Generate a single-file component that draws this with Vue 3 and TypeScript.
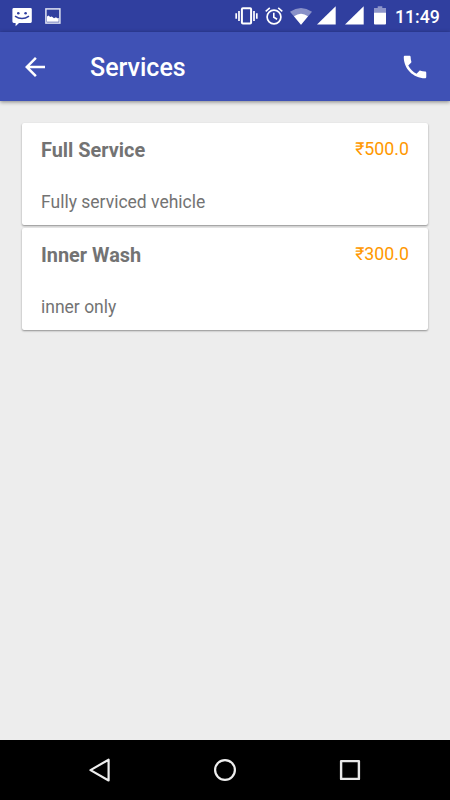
<script setup lang="ts">
interface Service {
  name: string
  price: string
  description: string
}

const services: Service[] = [
  { name: 'Full Service', price: '₹500.0', description: 'Fully serviced vehicle' },
  { name: 'Inner Wash', price: '₹300.0', description: 'inner only' },
]
</script>

<template>
  <div class="screen">
    <div class="status-bar">
      <svg class="message" width="20" height="19" viewBox="0 0 20 19">
        <path fill="#fff" d="M1.500 0h17a1.300 1.300 0 0 1 1.300 1.300v12.200a1.400 1.400 0 0 1-1.300 1.400H7L3.600 18.300V14.900H1.800A1.400 1.400 0 0 1 .4 13.500V1.300A1.300 1.300 0 0 1 1.500 0z" />
        <circle cx="6.300" cy="5.200" r="1.300" fill="#303f9f" />
        <circle cx="13.600" cy="5.200" r="1.300" fill="#303f9f" />
        <path d="M3 8.100Q10 13 17 8.100" fill="none" stroke="#303f9f" stroke-width="1.500" />
      </svg>
      <svg class="picture" width="16" height="16" viewBox="0 0 16 16">
        <rect x=".9" y=".9" width="14" height="14.200" fill="none" stroke="#dfe2f2" stroke-width="1.500" />
        <path fill="#fff" d="M2 13.700V8.600l1.500-1 1.700 1.500 1.600-.7 2.200 1.800 2-1 1.300 1.100 1.400-.4v3.800z" />
      </svg>
      <span class="spacer" />
      <svg class="vibrate" width="24" height="18" viewBox="0 0 24 18">
        <rect x="6.900" y="1.200" width="9.200" height="15.300" rx="1" fill="none" stroke="#fff" stroke-width="2" />
        <path fill="none" stroke="#fff" stroke-width="1.700" d="M4 4v10M1.200 6.200v5.600M19 4v10M21.800 6.200v5.600" />
      </svg>
      <svg class="alarm" width="18" height="18" viewBox="0 0 18 18">
        <circle cx="9" cy="10" r="6.900" fill="none" stroke="#fff" stroke-width="1.700" />
        <path fill="none" stroke="#fff" stroke-width="1.600" d="M.7 4.300 4.800.9M17.300 4.300 13.200.9M8.800 5.800v4.500l3.300 2" />
      </svg>
      <svg class="wifi" width="22" height="17" viewBox="0 0 22 17">
        <path fill="#8991c8" d="M0 3.700Q11-3.700 22 3.700L11 16.800z" />
        <path fill="#fff" d="M4 8.200Q11 3.200 18 8.200L11 16.800z" />
      </svg>
      <svg class="signal" width="19" height="19" viewBox="0 0 19 19">
        <path fill="#fff" d="M18.700.3v18.200H0z" />
      </svg>
      <svg class="signal second" width="19" height="19" viewBox="0 0 19 19">
        <path fill="#fff" d="M18.700.3v18.200H0z" />
      </svg>
      <svg class="battery" width="12" height="19" viewBox="0 0 12 19">
        <path fill="#8e96ca" d="M3.700.2h4.600V2H12v5H0V2h3.700z" />
        <path fill="#fff" d="M0 6.700h12v10.800a.9.900 0 0 1-.9.900H.9a.9.900 0 0 1-.9-.9z" />
      </svg>
      <span class="clock">11:49</span>
    </div>

    <header class="toolbar">
      <svg class="back" width="30" height="30" viewBox="0 0 24 24">
        <path fill="#fff" d="M20 11H7.830l5.590-5.590L12 4l-8 8 8 8 1.410-1.410L7.830 13H20v-2z" />
      </svg>
      <h1>Services</h1>
      <svg class="phone" width="30" height="30" viewBox="0 0 24 24">
        <path fill="#fff" d="M6.620 10.790c1.440 2.830 3.760 5.140 6.590 6.590l2.200-2.200c.27-.27.670-.36 1.020-.24 1.120.37 2.330.57 3.570.57.550 0 1 .45 1 1V20c0 .55-.45 1-1 1-9.390 0-17-7.610-17-17 0-.55.450-1 1-1h3.500c.55 0 1 .45 1 1 0 1.250.2 2.450.57 3.570.11.350.03.740-.25 1.020l-2.200 2.200z" />
      </svg>
    </header>

    <main>
      <article v-for="service in services" :key="service.name" class="card">
        <div class="heading">
          <h2>{{ service.name }}</h2>
          <span class="price">{{ service.price }}</span>
        </div>
        <p>{{ service.description }}</p>
      </article>
    </main>

    <nav class="nav-bar">
      <svg width="24" height="26" viewBox="0 0 24 26">
        <path d="M20.600 2.700v20.800L2.500 13.100z" fill="none" stroke="#eee" stroke-width="2.200" stroke-linejoin="round" />
      </svg>
      <svg width="24" height="24" viewBox="0 0 24 24">
        <circle cx="12" cy="12" r="9.900" fill="none" stroke="#eee" stroke-width="2.200" />
      </svg>
      <svg width="24" height="24" viewBox="0 0 24 24">
        <rect x="3.100" y="3.100" width="17.800" height="17.800" fill="none" stroke="#e8e8e8" stroke-width="2.400" stroke-linejoin="round" />
      </svg>
    </nav>
  </div>
</template>

<style>
body {
  margin: 0;
}
</style>

<style scoped>
.screen {
  display: flex;
  flex-direction: column;
  width: 450px;
  height: 800px;
  overflow: hidden;
  background: #ededed;
  font-family: Roboto, "Noto Sans", sans-serif;
}

svg {
  display: block;
  flex: none;
}

.status-bar {
  display: flex;
  align-items: flex-start;
  box-sizing: border-box;
  height: 32px;
  padding: 6px 10px 0 12px;
  background: #303f9f;
}

.message {
  margin-top: 2px;
}

.picture {
  margin: 2px 0 0 13px;
}

.spacer {
  flex: 1;
}

.vibrate {
  margin: 1px 6px 0 0;
}

.alarm {
  margin: 1px 7px 0 0;
}

.wifi {
  margin: 2px 5px 0 0;
}

.signal {
  margin-right: 9px;
}

.signal.second {
  margin-right: 10px;
}

.battery {
  margin-right: 9px;
}

.clock {
  width: 45px;
  margin-top: 1px;
  color: #fff;
  font-size: 17.7px;
  font-weight: 500;
  line-height: 21px;
  white-space: nowrap;
}

.toolbar {
  display: flex;
  align-items: center;
  box-sizing: border-box;
  height: 69px;
  padding: 0 20px;
  background: #3f51b5;
  box-shadow: 0 1px 4px rgba(0, 0, 0, 0.45);
}

h1 {
  flex: 1;
  margin: 2px 0 0 40px;
  color: #fff;
  font-size: 25px;
  font-weight: 500;
  line-height: 30px;
}

main {
  display: flex;
  flex: 1;
  flex-direction: column;
  gap: 3px;
  padding: 22px 22px 0;
}

.card {
  box-sizing: border-box;
  height: 102px;
  padding: 15px 19px 0;
  border-radius: 2px;
  background: #fff;
  box-shadow: 0 1px 2px rgba(0, 0, 0, 0.4);
}

.heading {
  display: flex;
  justify-content: space-between;
}

h2 {
  margin: 1px 0 0;
  color: #737373;
  font-size: 19.9px;
  font-weight: 700;
  line-height: 24px;
}

.price {
  color: #ff9800;
  font-size: 17.8px;
  line-height: 22px;
}

p {
  margin: 28px 0 0;
  color: #737373;
  font-size: 17.5px;
  line-height: 22px;
}

.nav-bar {
  display: flex;
  align-items: center;
  justify-content: center;
  gap: 101px;
  height: 60px;
  background: #000;
}
</style>
